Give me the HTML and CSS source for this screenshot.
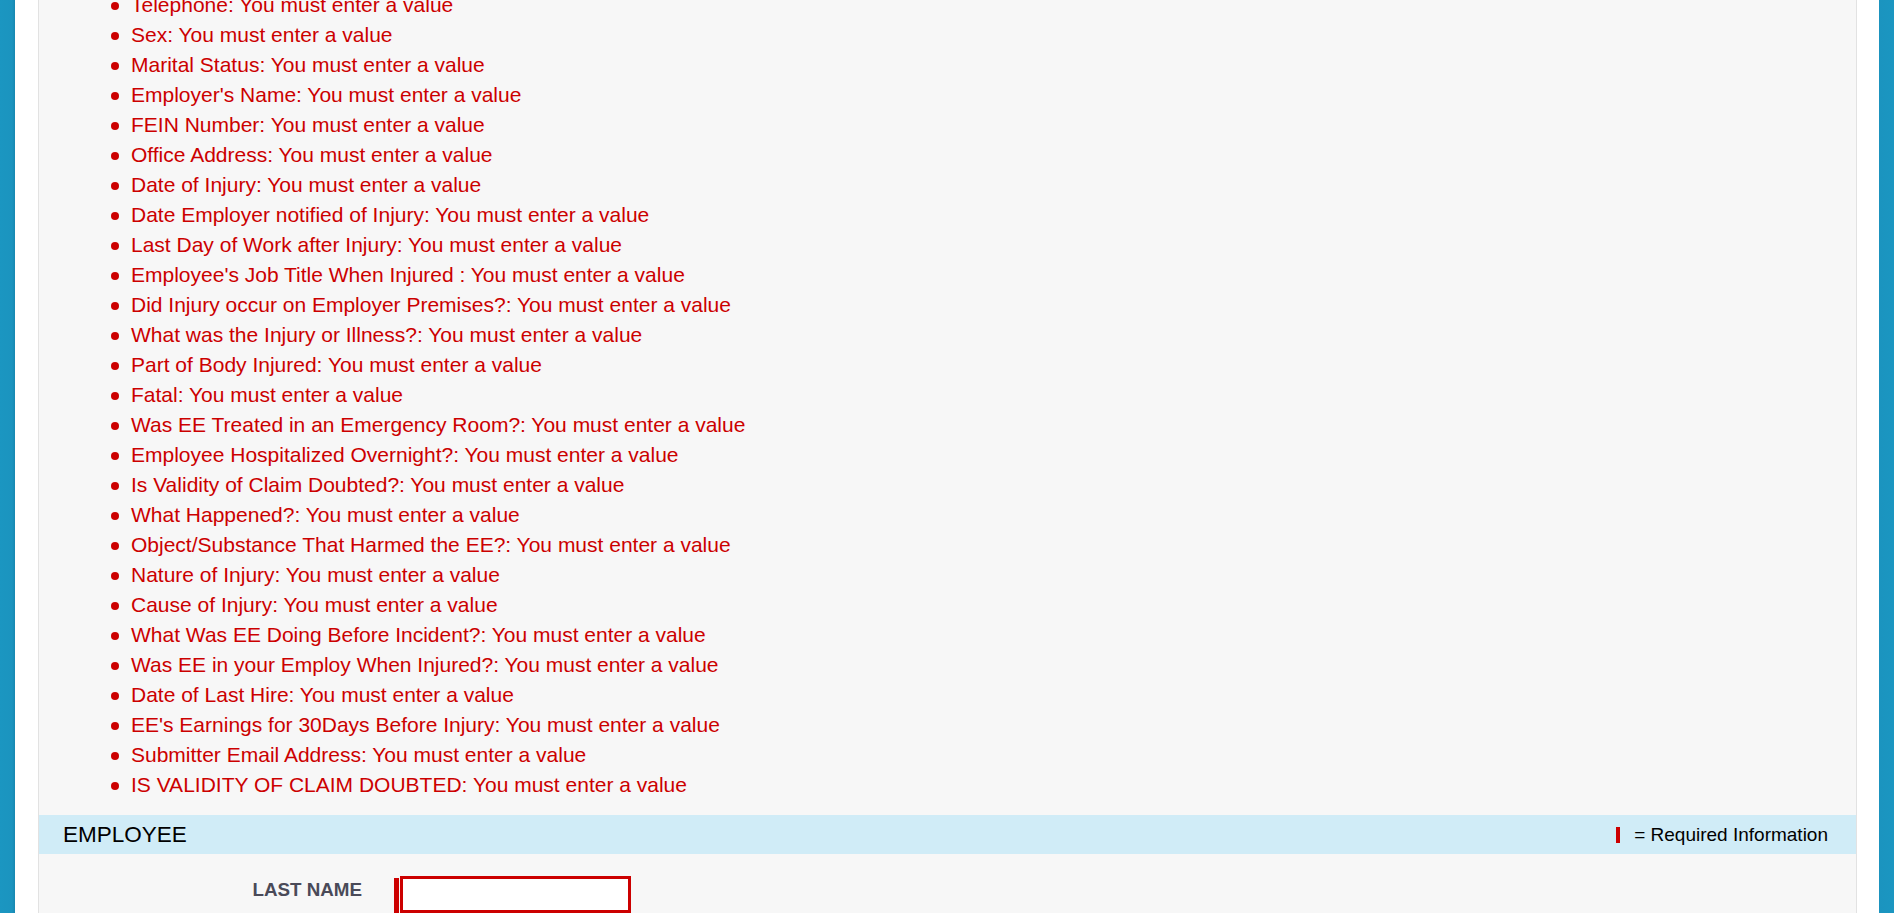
FILE: index.html
```html
<!DOCTYPE html>
<html lang="en">
<head>
<meta charset="utf-8">
<title>Claim Form</title>
<link rel="stylesheet" href="styles.css">
</head>
<body>
<div class="page">
  <div class="panel">
    <ul class="errors">
      <li>Telephone: You must enter a value</li>
      <li>Sex: You must enter a value</li>
      <li>Marital Status: You must enter a value</li>
      <li>Employer's Name: You must enter a value</li>
      <li>FEIN Number: You must enter a value</li>
      <li>Office Address: You must enter a value</li>
      <li>Date of Injury: You must enter a value</li>
      <li>Date Employer notified of Injury: You must enter a value</li>
      <li>Last Day of Work after Injury: You must enter a value</li>
      <li>Employee's Job Title When Injured : You must enter a value</li>
      <li>Did Injury occur on Employer Premises?: You must enter a value</li>
      <li>What was the Injury or Illness?: You must enter a value</li>
      <li>Part of Body Injured: You must enter a value</li>
      <li>Fatal: You must enter a value</li>
      <li>Was EE Treated in an Emergency Room?: You must enter a value</li>
      <li>Employee Hospitalized Overnight?: You must enter a value</li>
      <li>Is Validity of Claim Doubted?: You must enter a value</li>
      <li>What Happened?: You must enter a value</li>
      <li>Object/Substance That Harmed the EE?: You must enter a value</li>
      <li>Nature of Injury: You must enter a value</li>
      <li>Cause of Injury: You must enter a value</li>
      <li>What Was EE Doing Before Incident?: You must enter a value</li>
      <li>Was EE in your Employ When Injured?: You must enter a value</li>
      <li>Date of Last Hire: You must enter a value</li>
      <li>EE's Earnings for 30Days Before Injury: You must enter a value</li>
      <li>Submitter Email Address: You must enter a value</li>
      <li>IS VALIDITY OF CLAIM DOUBTED: You must enter a value</li>
    </ul>
    <div class="section-head">
      <span class="section-title">EMPLOYEE</span>
      <span class="req"><span class="req-bar"></span>= Required Information</span>
    </div>
    <div class="field">
      <label class="field-label" for="lastname">LAST NAME</label>
      <span class="field-req"></span>
      <input class="field-input" id="lastname" type="text">
    </div>
  </div>
</div>
</body>
</html>
```
FILE: styles.css
```css
html, body {
  margin: 0;
  height: 100%;
  overflow: hidden;
}
body {
  background: linear-gradient(to right, #1b96c1 0, #1b94bf 12px, #1887b0 15px, #1887b0 15px, #1b94bf 1879px, #1b96c1 100%);
  font-family: "Liberation Sans", Arial, sans-serif;
}
.page {
  display: flow-root;
  margin: 0 15px;
  height: 100%;
  background: #ffffff;
  padding: 0 22px 0 23px;
}
.panel {
  display: flow-root;
  height: 100%;
  background: #f7f7f7;
  border-left: 1px solid #e2e2e2;
  border-right: 1px solid #e2e2e2;
}
.errors {
  margin: -10px 0 15px 0;
  padding: 0 0 0 92px;
  list-style: none;
  color: #cc0000;
  font-size: 21px;
  line-height: 30px;
}
.errors li::before {
  content: "";
  display: inline-block;
  width: 8px;
  height: 8px;
  border-radius: 50%;
  background: #cc0000;
  margin-left: -20px;
  margin-right: 12px;
  vertical-align: middle;
}
.section-head {
  height: 39px;
  background: #d0ecf7;
  display: flex;
  align-items: center;
  justify-content: space-between;
  padding: 0 28px 0 24px;
  color: #000;
}
.section-title {
  font-size: 22.5px;
}
.req {
  display: flex;
  align-items: center;
  font-size: 19px;
}
.req-bar {
  width: 4px;
  height: 16px;
  background: #cc0000;
  margin-right: 14px;
}
.field {
  display: flex;
  align-items: flex-start;
  margin-top: 22px;
}
.field-label {
  width: 323px;
  text-align: right;
  font-weight: bold;
  font-size: 18.8px;
  color: #4a4a58;
  padding-top: 3px;
}
.field-req {
  width: 5px;
  height: 40px;
  margin: 2px 1px 0 32px;
  background: #cc0000;
}
.field-input {
  width: 225px;
  height: 31px;
  margin: 0;
  padding: 0;
  border: 3px solid #cc0000;
  background: #ffffff;
  box-sizing: content-box;
}
```
